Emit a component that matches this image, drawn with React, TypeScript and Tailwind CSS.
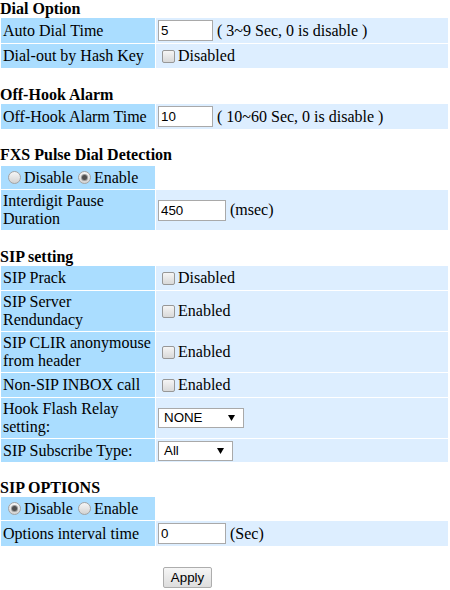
import type { ReactNode } from 'react';

const labelCell = 'bg-[#aaddff] pl-[2px] pr-[1px] py-0 align-middle leading-[18px] text-left font-normal';
const valueCell = 'bg-[#ddeeff] pl-[2px] py-0 align-middle leading-[18px]';
const ctrlFont = "font-['Liberation_Sans',Arial,sans-serif] text-[13.33px]";

const Heading = ({ children, className = '' }: { children: ReactNode; className?: string }) => (
  <div className={`h-[17px] leading-[17px] text-[16px] font-bold ${className}`}>{children}</div>
);

const TextBox = ({ value, width }: { value: string; width: string }) => (
  <input
    defaultValue={value}
    className={`${width} h-[21px] border border-[#a9a9a9] bg-white px-[2px] text-black outline-none ${ctrlFont}`}
  />
);

const Checkbox = () => (
  <span className="ml-[4px] mr-[3px] inline-block h-[13px] w-[13px] shrink-0 rounded-[2px] border border-[#979797] bg-gradient-to-b from-[#f5f5f5] to-[#d9d9d9]" />
);

const Radio = ({ checked, className = '' }: { checked?: boolean; className?: string }) => (
  <span
    className={`mr-[3px] inline-flex h-[13px] w-[13px] shrink-0 items-center justify-center rounded-full border border-[#a3a3a3] bg-gradient-to-b from-[#f6f6f6] to-[#d3d3d3] ${className}`}
  >
    {checked && <span className="h-[5px] w-[5px] rounded-full bg-[#4f4f4f] ring-1 ring-[#9a9a9a]" />}
  </span>
);

const Select = ({ value, width }: { value: string; width: string }) => (
  <span
    className={`inline-flex h-[20px] ${width} items-center justify-between border border-[#a9a9a9] bg-white pl-[5px] pr-[8px] text-black ${ctrlFont}`}
  >
    {value}
    <svg width="7" height="6" viewBox="0 0 7 6">
      <polygon points="0,0 7,0 3.5,6" fill="#000" />
    </svg>
  </span>
);

const Row = ({ label, h, children }: { label: string; h: string; children: ReactNode }) => (
  <tr className={h}>
    <td className={labelCell}>{label}</td>
    <td className={valueCell}>
      <div className="flex items-center">{children}</div>
    </td>
  </tr>
);

const Table = ({ children, className = '' }: { children: ReactNode; className?: string }) => (
  <table className={`w-[449px] table-fixed border-separate border-spacing-[1px] ${className}`}>
    <colgroup>
      <col className="w-[154px]" />
      <col className="w-[292px]" />
    </colgroup>
    <tbody>{children}</tbody>
  </table>
);

const RadioRow = ({ first }: { first: boolean }) => (
  <tr className="h-[23px]">
    <td className={`${labelCell} pl-[1px]`}>
      <div className="flex items-center">
        <Radio checked={first} className="ml-[5px]" />
        <span>Disable</span>
        <Radio checked={!first} className="ml-[5px]" />
        <span>Enable</span>
      </div>
    </td>
  </tr>
);

export default function App() {
  return (
    <div className="h-[590px] w-[450px] overflow-hidden bg-white font-['Liberation_Serif','Times_New_Roman',serif] text-[16px] text-black">
      <Heading className="h-[16px] leading-[16px]">Dial Option</Heading>
      <Table>
        <Row label="Auto Dial Time" h="h-[25px]">
          <TextBox value="5" width="w-[55px]" />
          <span className="ml-[4px]">( 3~9 Sec, 0 is disable )</span>
        </Row>
        <Row label="Dial-out by Hash Key" h="h-[24px]">
          <Checkbox />
          <span>Disabled</span>
        </Row>
      </Table>

      <Heading className="mt-[17px]">Off-Hook Alarm</Heading>
      <Table>
        <Row label="Off-Hook Alarm Time" h="h-[25px]">
          <TextBox value="10" width="w-[55px]" />
          <span className="ml-[4px]">( 10~60 Sec, 0 is disable )</span>
        </Row>
      </Table>

      <Heading className="mt-[16px]">FXS Pulse Dial Detection</Heading>
      <Table className="mt-[2px]">
        <RadioRow first={false} />
        <Row label="Interdigit Pause Duration" h="h-[40px]">
          <TextBox value="450" width="w-[68px]" />
          <span className="ml-[4px]">(msec)</span>
        </Row>
      </Table>

      <Heading className="mt-[17px]">SIP setting</Heading>
      <Table>
        <Row label="SIP Prack" h="h-[24px]">
          <Checkbox />
          <span>Disabled</span>
        </Row>
        <Row label="SIP Server Rendundacy" h="h-[40px]">
          <Checkbox />
          <span>Enabled</span>
        </Row>
        <Row label="SIP CLIR anonymouse from header" h="h-[40px]">
          <Checkbox />
          <span>Enabled</span>
        </Row>
        <Row label="Non-SIP INBOX call" h="h-[24px]">
          <Checkbox />
          <span>Enabled</span>
        </Row>
        <Row label="Hook Flash Relay setting:" h="h-[40px]">
          <Select value="NONE" width="w-[86px]" />
        </Row>
        <Row label="SIP Subscribe Type:" h="h-[23px]">
          <Select value="All" width="w-[75px]" />
        </Row>
      </Table>

      <Heading className="mt-[16px]">SIP OPTIONS</Heading>
      <Table>
        <RadioRow first={true} />
        <Row label="Options interval time" h="h-[25px]">
          <TextBox value="0" width="w-[68px]" />
          <span className="ml-[4px]">(Sec)</span>
        </Row>
      </Table>

      <div className="mt-[20px] flex pl-[163px]">
        <button
          className={`h-[21px] w-[49px] rounded-[2px] border border-[#adadad] bg-gradient-to-b from-[#f6f6f6] to-[#dddddd] text-black ${ctrlFont}`}
        >
          Apply
        </button>
      </div>
    </div>
  );
}
